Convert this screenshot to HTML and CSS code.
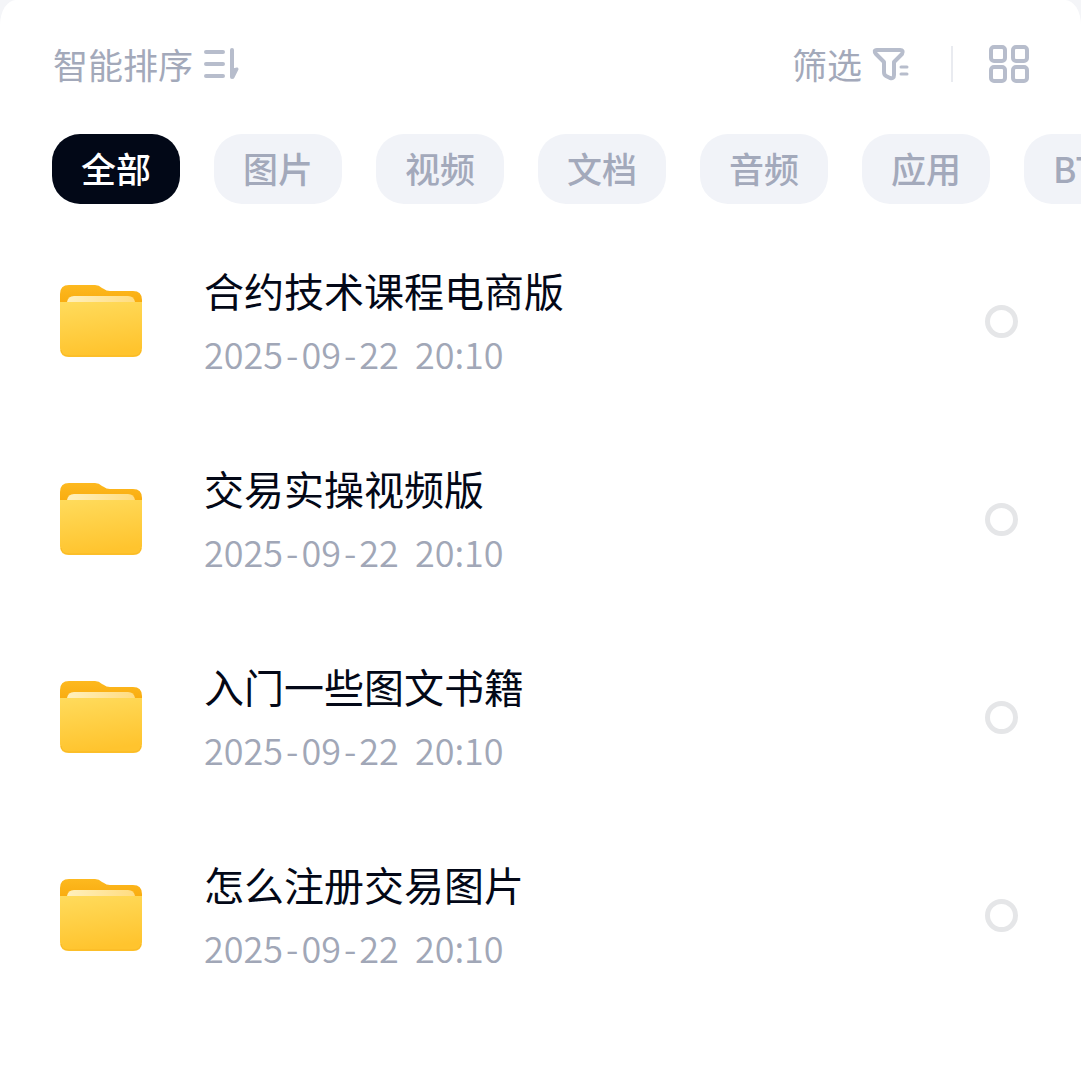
FILE: index.html
```html
<!DOCTYPE html>
<html lang="zh-CN">
<head>
    <meta charset="UTF-8">
    <meta name="viewport" content="width=device-width, initial-scale=1.0">
    <title>文件列表</title>
    <link rel="stylesheet" href="styles.css">
</head>
<body>

    <!-- shared folder icon -->
    <svg class="defs" aria-hidden="true">
        <defs>
            <linearGradient id="back" x1="0" y1="0" x2="0" y2="1">
                <stop offset="0" stop-color="#fdb91f"/>
                <stop offset="1" stop-color="#f9ac10"/>
            </linearGradient>
            <linearGradient id="paper" x1="0" y1="0" x2="1" y2="0">
                <stop offset="0" stop-color="#fff0bd"/>
                <stop offset="1" stop-color="#ffdc80"/>
            </linearGradient>
            <linearGradient id="front" x1="0" y1="0" x2="0.2" y2="1">
                <stop offset="0" stop-color="#ffdb5c"/>
                <stop offset="1" stop-color="#ffc42e"/>
            </linearGradient>
            <symbol id="folder" viewBox="0 0 82 74">
                <path fill="url(#back)" d="M0 19V10Q0 1 9 1H35Q39 1 42 4L44 5Q46 7 50 7H73Q82 7 82 16V19Z"/>
                <path fill="url(#paper)" d="M7 19V18Q8 12 14 12H68Q74 12 75 18V19Z"/>
                <path fill="url(#front)" d="M0 18H82V64Q82 73 73 73H9Q0 73 0 64Z"/>
                <path fill="none" stroke="#f9b925" d="M1 66Q2 72 9 72H73Q80 72 81 66"/>
            </symbol>
        </defs>
    </svg>

    <main class="sheet">
        <header class="toolbar">
            <button class="tool sort">智能排序
                <svg width="38" height="36" viewBox="0 0 38 36" fill="none" stroke="#b7bdcc" stroke-width="4" stroke-linecap="round" stroke-linejoin="round">
                    <path d="M3 6H20M3 18H20M3 30H20"/>
                    <path d="M29 4V31"/>
                    <path d="M30 24L34 23L30 31Z" fill="#b7bdcc" stroke-width="3"/>
                </svg>
            </button>
            <div class="tools">
                <button class="tool filter">筛选
                    <svg width="38" height="36" viewBox="0 0 38 36" fill="none" stroke="#b7bdcc" stroke-width="4" stroke-linecap="round" stroke-linejoin="round">
                        <path d="M5 4H28Q32 4 30 8L22 16V29Q22 33 18 32L14 30Q12 29 12 26V16L4 8Q1 4 5 4Z"/>
                        <path d="M29 21H35M29 28H35" stroke-width="3"/>
                    </svg>
                </button>
                <span class="divider"></span>
                <button class="tool view" aria-label="网格视图">
                    <svg width="42" height="40" viewBox="0 0 42 40" fill="none" stroke="#b7bdcc" stroke-width="4">
                        <rect x="3" y="3" width="14" height="14" rx="3"/>
                        <rect x="25" y="3" width="14" height="14" rx="3"/>
                        <rect x="3" y="23" width="14" height="14" rx="3"/>
                        <rect x="25" y="23" width="14" height="14" rx="3"/>
                    </svg>
                </button>
            </div>
        </header>

        <nav class="chips">
            <button class="chip active">全部</button>
            <button class="chip">图片</button>
            <button class="chip">视频</button>
            <button class="chip">文档</button>
            <button class="chip">音频</button>
            <button class="chip">应用</button>
            <button class="chip">BT</button>
        </nav>

        <ul class="files">
            <li>
                <label class="file">
                    <svg class="folder"><use href="#folder"/></svg>
                    <span class="info">
                        <span class="name">合约技术课程电商版</span>
                        <time class="date">2025<span>-</span>09<span>-</span>22  20:10</time>
                    </span>
                    <input type="checkbox" class="pick">
                </label>
            </li>
            <li>
                <label class="file">
                    <svg class="folder"><use href="#folder"/></svg>
                    <span class="info">
                        <span class="name">交易实操视频版</span>
                        <time class="date">2025<span>-</span>09<span>-</span>22  20:10</time>
                    </span>
                    <input type="checkbox" class="pick">
                </label>
            </li>
            <li>
                <label class="file">
                    <svg class="folder"><use href="#folder"/></svg>
                    <span class="info">
                        <span class="name">入门一些图文书籍</span>
                        <time class="date">2025<span>-</span>09<span>-</span>22  20:10</time>
                    </span>
                    <input type="checkbox" class="pick">
                </label>
            </li>
            <li>
                <label class="file">
                    <svg class="folder"><use href="#folder"/></svg>
                    <span class="info">
                        <span class="name">怎么注册交易图片</span>
                        <time class="date">2025<span>-</span>09<span>-</span>22  20:10</time>
                    </span>
                    <input type="checkbox" class="pick">
                </label>
            </li>
        </ul>
    </main>

</body>
</html>
```
FILE: styles.css
```css
* {
    box-sizing: border-box;
}

body {
    margin: 0;
    background: #f4f5f8;
    font-family: "Noto Sans CJK SC", sans-serif;
    color: #030817;
}

button {
    border: 0;
    padding: 0;
    background: none;
    font-family: inherit;
    cursor: pointer;
}

.defs {
    position: absolute;
    width: 0;
    height: 0;
}

.sheet {
    min-height: 100vh;
    padding-top: 40px;
    background: #fff;
    border-radius: 16px 16px 0 0 / 25px 25px 0 0;
    overflow: hidden;
}

/* sort / filter row */
.toolbar {
    display: flex;
    justify-content: space-between;
    align-items: center;
    height: 48px;
    padding: 0 51px 0 53px;
}

.tools {
    display: flex;
    align-items: center;
}

.tool {
    display: flex;
    align-items: center;
    gap: 10px;
    font-size: 35px;
    line-height: 46px;
    color: #a3a9ba;
}

.divider {
    width: 2px;
    height: 36px;
    margin: 0 35px 0 41px;
    background: #e9ebf0;
}

/* category chips, the row runs off the right edge */
.chips {
    display: flex;
    gap: 34px;
    padding: 46px 0 0 52px;
    overflow: hidden;
}

.chip {
    flex: none;
    min-width: 128px;
    height: 70px;
    padding: 0 29px 2px;
    border-radius: 28px;
    background: #f1f3f8;
    font-size: 35px;
    font-weight: 500;
    line-height: 68px;
    text-align: left;
    color: #a3a9bb;
}

.chip.active {
    background: #020817;
    color: #fff;
}

/* file list */
.files {
    list-style: none;
    margin: 18px 0 0;
    padding: 0;
}

.file {
    display: flex;
    align-items: center;
    height: 198px;
    padding: 0 63px 0 60px;
}

.folder {
    width: 82px;
    height: 74px;
    margin-right: 62px;
}

.info {
    flex: 1;
    display: flex;
    flex-direction: column;
    gap: 10px;
}

.name {
    font-size: 40px;
    line-height: 54px;
}

.date {
    font-size: 36px;
    font-weight: 350;
    line-height: 52px;
    white-space: pre;
    color: #a1a7b7;
}

.date span {
    padding: 0 3px;
}

.pick {
    appearance: none;
    width: 33px;
    height: 33px;
    margin: 0;
    border: 5px solid #e5e6e8;
    border-radius: 50%;
}

.pick:checked {
    border-color: #020817;
}
```
